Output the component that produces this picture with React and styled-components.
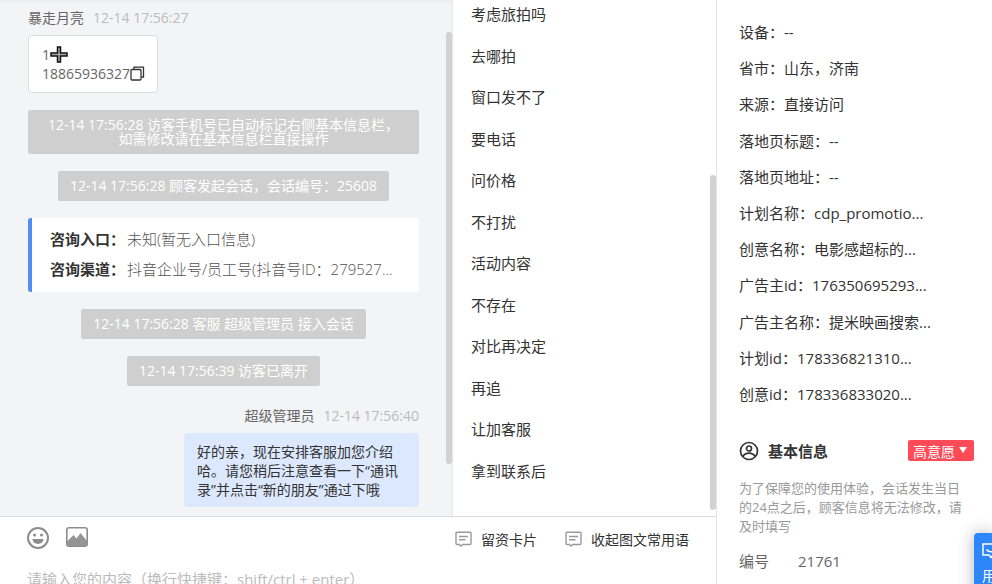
import React from "react"
import styled, { createGlobalStyle } from "styled-components"

const GlobalStyle = createGlobalStyle`
  * {
    box-sizing: border-box;
  }

  body {
    margin: 0;
    background: #fff;
    color: #333;
    font-family: "Open Sans", "Noto Sans CJK SC", sans-serif;
    font-size: 14px;
    overflow: hidden;
  }

  button, textarea {
    font: inherit;
    color: inherit;
    background: none;
    border: 0;
    padding: 0;
    margin: 0;
  }

  svg {
    display: block;
    flex: none;
  }
`

const Page = styled.div`
  position: relative;
  display: flex;
  height: 100vh;
  overflow: hidden;
`

const Workspace = styled.main`
  flex: 1;
  min-width: 0;
  display: flex;
  flex-direction: column;
`

const Panes = styled.div`
  flex: 1;
  min-height: 0;
  display: flex;
`

const ChatPane = styled.section`
  flex: 1;
  min-width: 0;
  display: flex;
  background: #f3f4f6;
  border-right: 1px solid #e6e7e9;
  box-shadow: inset 0 3px 3px -2px #e9eaec;
`

const Messages = styled.div`
  flex: 1;
  min-width: 0;
  padding: 5px 27px 0 28px;
  display: flex;
  flex-direction: column;
  align-items: center;
  gap: 17px;
`

const Rail = styled.div`
  width: 6px;
  flex: none;
  padding: ${p => p.$top}px 0 ${p => p.$bottom}px;
`

const Thumb = styled.div`
  height: 100%;
  border-radius: 3px;
  background: #d2d2d3;
`

const Message = styled.article`
  align-self: ${p => (p.$own ? "flex-end" : "flex-start")};
  display: flex;
  flex-direction: column;
  align-items: ${p => (p.$own ? "flex-end" : "flex-start")};
  gap: 4px;
`

const Sender = styled.header`
  display: flex;
  gap: 9px;
  line-height: 26px;
  color: #666;

  time {
    color: #bbb;
  }
`

const Bubble = styled.div`
  padding: 9px 12px 9px 13px;
  border: 1px solid #dcdee0;
  border-radius: 4px;
  background: #fff;
  color: #666;
  line-height: 19px;
`

const OwnBubble = styled(Bubble)`
  width: 235px;
  padding: 9px 12px 8px 13px;
  border: 0;
  background: #dce8fe;
  color: #333;
`

const BubbleLine = styled.div`
  display: flex;
  align-items: center;
  height: 19px;
`

const Notice = styled.p`
  margin: 0;
  align-self: ${p => (p.$wide ? "stretch" : "center")};
  padding: 8px 12px;
  border-radius: 2px;
  background: #cfcfcf;
  color: #fff;
  line-height: 14px;
  text-align: center;
`

const SourceCard = styled.dl`
  margin: 0;
  align-self: stretch;
  padding: 6px 18px 8px;
  border-left: 4px solid #4e8df5;
  border-radius: 3px;
  background: #fff;
  font-size: 15px;
  line-height: 30px;

  div {
    display: flex;
  }

  dt {
    flex: none;
    width: 77px;
    font-weight: bold;
  }

  dd {
    margin: 0;
    color: #555;
    font-weight: 300;
    white-space: nowrap;
  }
`

const PhrasePane = styled.aside`
  width: 263px;
  flex: none;
  display: flex;
`

const Phrases = styled.ul`
  flex: 1;
  margin: 0;
  padding: 3px 18px 34px;
  list-style: none;
  display: flex;
  flex-direction: column;
  justify-content: space-between;
`

const Phrase = styled.button`
  display: block;
  font-size: 15px;
  line-height: 22px;
`

const Composer = styled.footer`
  flex: none;
  height: 68px;
  overflow: hidden;
  border-top: 1px solid #d9d9d9;
  padding: 10px 27px 0;
`

const Toolbar = styled.div`
  display: flex;
  align-items: flex-start;
  height: 41px;
`

const IconButton = styled.button`
  margin-right: 17px;
`

const ToolButton = styled.button`
  display: flex;
  align-items: center;
  gap: 9px;
  height: 24px;
  margin-left: ${p => (p.$first ? "auto" : "28px")};
`

const Input = styled.textarea`
  display: block;
  width: 100%;
  height: 22px;
  font-size: 15px;
  line-height: 22px;
  resize: none;
  outline: 0;
  overflow: hidden;

  &::placeholder {
    color: #bbb;
    opacity: 1;
  }
`

const Details = styled.aside`
  width: 276px;
  flex: none;
  padding: 21px 18px 0 22px;
  border-left: 1px solid #e3e3e3;
`

const VisitInfo = styled.dl`
  margin: 0;
  min-height: 384px;
  display: flex;
  flex-direction: column;
  justify-content: space-between;
  font-size: 15px;
  line-height: 22px;

  div {
    display: flex;
    white-space: nowrap;
  }

  dd {
    margin: 0;
  }
`

const InfoHeader = styled.div`
  display: flex;
  align-items: center;
  gap: 9px;
  margin-top: 34px;
  height: 23px;

  h2 {
    flex: 1;
    margin: 0;
    font-size: 15px;
    line-height: 22px;
  }
`

const IntentButton = styled.button`
  display: flex;
  align-items: center;
  gap: 4px;
  height: 21px;
  padding: 0 7px 0 5px;
  border-radius: 2px;
  background: #ff4a57;
  color: #fff;
`

const Hint = styled.p`
  margin: 17px 0 14px;
  padding-right: 8px;
  color: #999;
  font-size: 13px;
  line-height: 19px;
`

const Field = styled.div`
  display: flex;
  gap: 29px;
  color: #666;
  font-size: 15px;
  line-height: 22px;
`

// sticks out of the right edge of the window
const Feedback = styled.button`
  position: absolute;
  top: 533px;
  right: 0;
  width: 18px;
  height: 80px;
  padding: 10px 0 0 8px;
  overflow: hidden;
  border-radius: 4px 0 0 4px;
  background: #2e86fb;
  color: #fff;
  box-shadow: 0 0 16px rgba(0, 0, 0, 0.3);
  display: flex;
  flex-direction: column;
  align-items: flex-start;
  gap: 6px;
`

const CrossIcon = () => (
  <svg width="18" height="17" viewBox="0 0 18 17">
    <path d="M7.500 1h3v6H17v3h-6.500v6h-3v-6H1V7h6.500z" fill="#aaa" stroke="#111" strokeWidth="1.500" />
  </svg>
)

const CopyIcon = () => (
  <svg width="15" height="15" viewBox="0 0 15 15" fill="none" stroke="#333" strokeWidth="1.300">
    <path d="M4 3.500V1.200h9.500v9.800h-2" />
    <rect x="1" y="3.500" width="10" height="10.500" rx="1" />
  </svg>
)

const SmileIcon = () => (
  <svg width="22" height="22" viewBox="0 0 22 22">
    <circle cx="11" cy="11" r="10" fill="none" stroke="#8c8c8c" strokeWidth="2" />
    <circle cx="7.500" cy="8" r="1.500" fill="#8c8c8c" />
    <circle cx="14.500" cy="8" r="1.500" fill="#8c8c8c" />
    <path d="M5.500 12h11a5.500 5 0 0 1-11 0z" fill="#8c8c8c" />
  </svg>
)

const PictureIcon = () => (
  <svg width="22" height="20" viewBox="0 0 22 20">
    <rect x="0.800" y="0.800" width="20.400" height="18.400" rx="2.200" fill="none" stroke="#8c8c8c" strokeWidth="1.600" />
    <path d="M1 14.500L7.500 8l3 3.500L14.500 6l6.500 8v3.500a1.500 1.500 0 0 1-1.500 1.500h-17A1.500 1.500 0 0 1 1 17.500z" fill="#959595" />
  </svg>
)

const CardIcon = () => (
  <svg width="17" height="16" viewBox="0 0 17 16" fill="none" stroke="#999" strokeWidth="1.400">
    <path d="M2 1.200h13a1 1 0 0 1 1 1v10.300a1 1 0 0 1-1 1H8l-2 1.500-1.500-1.500H2a1 1 0 0 1-1-1V2.200a1 1 0 0 1 1-1z" />
    <path d="M4 5.500h9M4 8.800h6.500" />
  </svg>
)

const UserIcon = () => (
  <svg width="20" height="20" viewBox="0 0 20 20" fill="none" stroke="#333" strokeWidth="1.700">
    <circle cx="10" cy="10" r="8.500" />
    <circle cx="10" cy="7.500" r="2.500" />
    <path d="M4 15.500c1.500-2.700 3.500-3.300 6-3.300s4.500.6 6 3.300" />
  </svg>
)

const CaretIcon = () => (
  <svg width="8" height="8" viewBox="0 0 8 8">
    <path d="M0 0h8L4 6z" fill="#fff" />
  </svg>
)

const FeedbackIcon = () => (
  <svg width="18" height="16" viewBox="0 0 18 16" fill="none" stroke="#fff" strokeWidth="1.500">
    <path d="M1 1h16v11h-6l-2 2.500L7 12H1z" />
    <path d="M4.500 6.500c2 3 7 3 9 0" />
  </svg>
)

const phrases = [
  "考虑旅拍吗",
  "去哪拍",
  "窗口发不了",
  "要电话",
  "问价格",
  "不打扰",
  "活动内容",
  "不存在",
  "对比再决定",
  "再追",
  "让加客服",
  "拿到联系后"
]

const visit = [
  ["设备", "--"],
  ["省市", "山东，济南"],
  ["来源", "直接访问"],
  ["落地页标题", "--"],
  ["落地页地址", "--"],
  ["计划名称", "cdp_promotio..."],
  ["创意名称", "电影感超标的..."],
  ["广告主id", "176350695293..."],
  ["广告主名称", "提米映画搜索..."],
  ["计划id", "178336821310..."],
  ["创意id", "178336833020..."]
]

const Chat = () => (
  <ChatPane>
    <Messages>
      <Message>
        <Sender>
          <span>暴走月亮</span>
          <time>12-14 17:56:27</time>
        </Sender>
        <Bubble>
          <BubbleLine>1<CrossIcon /></BubbleLine>
          <BubbleLine>18865936327<CopyIcon /></BubbleLine>
        </Bubble>
      </Message>
      <Notice $wide>
        12-14 17:56:28 访客手机号已自动标记右侧基本信息栏，
        <br />
        如需修改请在基本信息栏直接操作
      </Notice>
      <Notice>12-14 17:56:28 顾客发起会话，会话编号：25608</Notice>
      <SourceCard>
        <div>
          <dt>咨询入口：</dt>
          <dd>未知(暂无入口信息)</dd>
        </div>
        <div>
          <dt>咨询渠道：</dt>
          <dd>抖音企业号/员工号(抖音号ID：279527...</dd>
        </div>
      </SourceCard>
      <Notice>12-14 17:56:28 客服 超级管理员 接入会话</Notice>
      <Notice>12-14 17:56:39 访客已离开</Notice>
      <Message $own>
        <Sender>
          <span>超级管理员</span>
          <time>12-14 17:56:40</time>
        </Sender>
        <OwnBubble>
          好的亲，现在安排客服加您介绍哈。请您稍后注意查看一下“通讯录”并点击“新的朋友”通过下哦
        </OwnBubble>
      </Message>
    </Messages>
    <Rail $top={32} $bottom={52}>
      <Thumb />
    </Rail>
  </ChatPane>
)

const App = () => (
  <>
    <GlobalStyle />
    <Page>
      <Workspace>
        <Panes>
          <Chat />
          <PhrasePane>
            <Phrases>
              {phrases.map(text => (
                <li key={text}>
                  <Phrase>{text}</Phrase>
                </li>
              ))}
            </Phrases>
            <Rail $top={175} $bottom={6}>
              <Thumb />
            </Rail>
          </PhrasePane>
        </Panes>
        <Composer>
          <Toolbar>
            <IconButton aria-label="表情"><SmileIcon /></IconButton>
            <IconButton aria-label="图片"><PictureIcon /></IconButton>
            <ToolButton $first><CardIcon />留资卡片</ToolButton>
            <ToolButton><CardIcon />收起图文常用语</ToolButton>
          </Toolbar>
          <Input aria-label="消息内容" placeholder="请输入您的内容（换行快捷键：shift/ctrl + enter）" />
        </Composer>
      </Workspace>
      <Details>
        <VisitInfo>
          {visit.map(([label, value]) => (
            <div key={label}>
              <dt>{label}：</dt>
              <dd>{value}</dd>
            </div>
          ))}
        </VisitInfo>
        <InfoHeader>
          <UserIcon />
          <h2>基本信息</h2>
          <IntentButton>高意愿<CaretIcon /></IntentButton>
        </InfoHeader>
        <Hint>为了保障您的使用体验，会话发生当日的24点之后，顾客信息将无法修改，请及时填写</Hint>
        <Field>
          <span>编号</span>
          <span>21761</span>
        </Field>
      </Details>
      <Feedback>
        <FeedbackIcon />
        用
      </Feedback>
    </Page>
  </>
)

export default App
